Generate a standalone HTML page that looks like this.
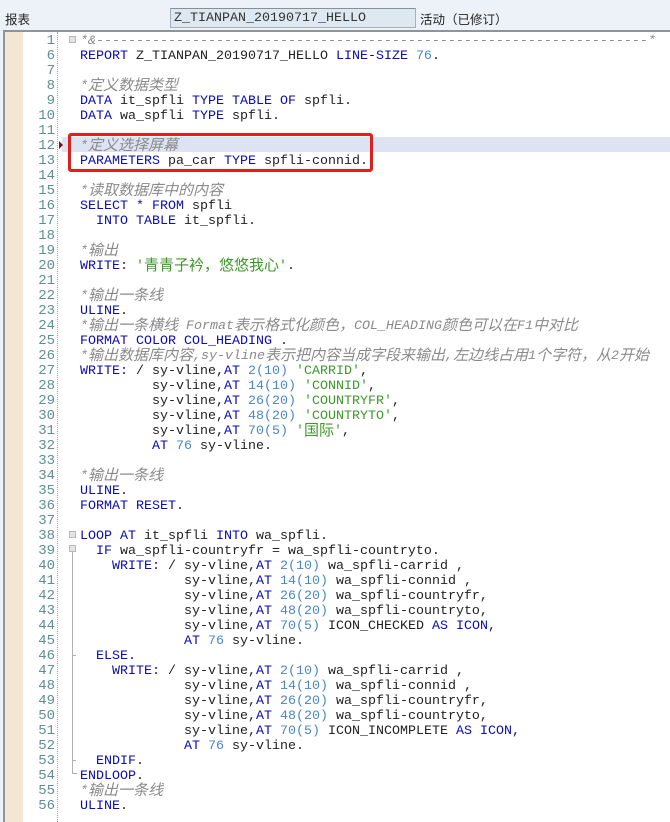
<!DOCTYPE html>
<html><head><meta charset="utf-8">
<style>
html,body{margin:0;padding:0;width:670px;height:822px;overflow:hidden;background:#fff}
body{position:relative;font-family:"Liberation Mono","Noto Sans CJK SC",monospace}
.a{position:absolute}
#code,#nums{position:absolute;margin:0;font:13.333px/15px "Liberation Mono","WenQuanYi Zen Hei",monospace;color:#222}
#code{left:80px;top:34px;white-space:pre}
#nums{left:24px;top:34px;width:31px;text-align:right;color:#5f8f8f;white-space:pre;font-size:14px}
.k{color:#0a0ac0}.n{color:#4a86c8}.s{color:#3c9a28}
.c{color:#8a8a8a;font-style:italic}
.z{font-family:"WenQuanYi Zen Hei","Noto Sans CJK SC",sans-serif;font-size:15px;line-height:0;position:relative;top:1px}
.lb{font:12.5px/16px "WenQuanYi Zen Hei","Noto Sans CJK SC",sans-serif;color:#222}
.fold{position:absolute;width:7px;height:7px;background:#e4e4e4;border:1px solid #b8b8b8;box-sizing:border-box}
</style></head><body>
<div class="a" style="left:0;top:0;width:670px;height:31px;background:#edf2f8"></div>
<div class="a" style="left:3px;top:30px;width:667px;height:2px;background:#8f9499"></div>
<div class="a lb" style="left:5px;top:11px">报表</div>
<div class="a" style="left:170px;top:8px;width:246px;height:20px;box-sizing:border-box;background:#dde8f0;border:1px solid #a9b0b5;border-top-color:#8b8f92;font:13.333px/20px 'Liberation Mono',monospace;color:#333;padding-left:3px">Z_TIANPAN_20190717_HELLO</div>
<div class="a lb" style="left:420px;top:11px">活动（已修订）</div>

<div class="a" style="left:0;top:31px;width:3px;height:791px;background:#edf2f8"></div>
<div class="a" style="left:3px;top:31px;width:2px;height:791px;background:#8f9499"></div>
<div class="a" style="left:5px;top:32px;width:18px;height:790px;background:#f3e6d3"></div>
<div class="a" style="left:57px;top:32px;height:790px;border-left:1px dotted #7fb0b0"></div>
<div class="a" style="left:62px;top:137px;width:608px;height:15px;background:#dde3f2"></div>
<div class="a" style="left:59px;top:141px;width:0;height:0;border-left:4px solid #7a1010;border-top:4px solid transparent;border-bottom:4px solid transparent"></div>

<div class="fold" style="left:69px;top:36px"></div>
<div class="fold" style="left:69px;top:531px"></div>
<div class="fold" style="left:69px;top:545px"></div>
<div class="a" style="left:72px;top:552px;width:1px;height:221px;background:#b0b0b0"></div>
<div class="a" style="left:72px;top:760px;width:4px;height:1px;background:#b0b0b0"></div>
<div class="a" style="left:72px;top:773px;width:5px;height:1px;background:#b0b0b0"></div>
<div class="a" style="left:72px;top:655px;width:4px;height:1px;background:#b0b0b0"></div>

<pre id="nums">1
6
7
8
9
10
11
12
13
14
15
16
17
18
19
20
21
22
23
24
25
26
27
28
29
30
31
32
33
34
35
36
37
38
39
40
41
42
43
44
45
46
47
48
49
50
51
52
53
54
55
56</pre>
<pre id="code"><span class="c">*&amp;---------------------------------------------------------------------*</span>
<span class="k">REPORT</span> Z_TIANPAN_20190717_HELLO <span class="k">LINE-SIZE</span> <span class="n">76</span>.

<span class="c">*<span class="z">定义数据类型</span></span>
<span class="k">DATA</span> it_spfli <span class="k">TYPE TABLE OF</span> spfli.
<span class="k">DATA</span> wa_spfli <span class="k">TYPE</span> spfli.

<span class="c">*<span class="z">定义选择屏幕</span></span>
<span class="k">PARAMETERS</span> pa_car <span class="k">TYPE</span> spfli-connid.

<span class="c">*<span class="z">读取数据库中的内容</span></span>
<span class="k">SELECT * FROM</span> spfli
  <span class="k">INTO TABLE</span> it_spfli.

<span class="c">*<span class="z">输出</span></span>
<span class="k">WRITE:</span> <span class="s">'<span class="z">青青子衿，悠悠我心</span>'</span>.

<span class="c">*<span class="z">输出一条线</span></span>
<span class="k">ULINE</span>.
<span class="c">*<span class="z">输出一条横线</span> Format<span class="z">表示格式化颜色，</span>COL_HEADING<span class="z">颜色可以在</span>F1<span class="z">中对比</span></span>
<span class="k">FORMAT COLOR COL_HEADING</span> .
<span class="c">*<span class="z">输出数据库内容</span>,sy-vline<span class="z">表示把内容当成字段来输出</span>,<span class="z">左边线占用</span>1<span class="z">个字符，从</span>2<span class="z">开始</span></span>
<span class="k">WRITE:</span> / sy-vline,<span class="k">AT</span> <span class="n">2(10)</span> <span class="s">'CARRID'</span>,
         sy-vline,<span class="k">AT</span> <span class="n">14(10)</span> <span class="s">'CONNID'</span>,
         sy-vline,<span class="k">AT</span> <span class="n">26(20)</span> <span class="s">'COUNTRYFR'</span>,
         sy-vline,<span class="k">AT</span> <span class="n">48(20)</span> <span class="s">'COUNTRYTO'</span>,
         sy-vline,<span class="k">AT</span> <span class="n">70(5)</span> <span class="s">'<span class="z">国际</span>'</span>,
         <span class="k">AT</span> <span class="n">76</span> sy-vline.

<span class="c">*<span class="z">输出一条线</span></span>
<span class="k">ULINE</span>.
<span class="k">FORMAT RESET</span>.

<span class="k">LOOP AT</span> it_spfli <span class="k">INTO</span> wa_spfli.
  <span class="k">IF</span> wa_spfli-countryfr = wa_spfli-countryto.
    <span class="k">WRITE:</span> / sy-vline,<span class="k">AT</span> <span class="n">2(10)</span> wa_spfli-carrid ,
             sy-vline,<span class="k">AT</span> <span class="n">14(10)</span> wa_spfli-connid ,
             sy-vline,<span class="k">AT</span> <span class="n">26(20)</span> wa_spfli-countryfr,
             sy-vline,<span class="k">AT</span> <span class="n">48(20)</span> wa_spfli-countryto,
             sy-vline,<span class="k">AT</span> <span class="n">70(5)</span> ICON_CHECKED <span class="k">AS ICON,</span>
             <span class="k">AT</span> <span class="n">76</span> sy-vline.
  <span class="k">ELSE</span>.
    <span class="k">WRITE:</span> / sy-vline,<span class="k">AT</span> <span class="n">2(10)</span> wa_spfli-carrid ,
             sy-vline,<span class="k">AT</span> <span class="n">14(10)</span> wa_spfli-connid ,
             sy-vline,<span class="k">AT</span> <span class="n">26(20)</span> wa_spfli-countryfr,
             sy-vline,<span class="k">AT</span> <span class="n">48(20)</span> wa_spfli-countryto,
             sy-vline,<span class="k">AT</span> <span class="n">70(5)</span> ICON_INCOMPLETE <span class="k">AS ICON,</span>
             <span class="k">AT</span> <span class="n">76</span> sy-vline.
  <span class="k">ENDIF</span>.
<span class="k">ENDLOOP</span>.
<span class="c">*<span class="z">输出一条线</span></span>
<span class="k">ULINE</span>.</pre>
<div class="a" style="left:68px;top:133px;width:305px;height:39px;box-sizing:border-box;border:3px solid #e0201c;border-radius:3px"></div>
</body></html>
